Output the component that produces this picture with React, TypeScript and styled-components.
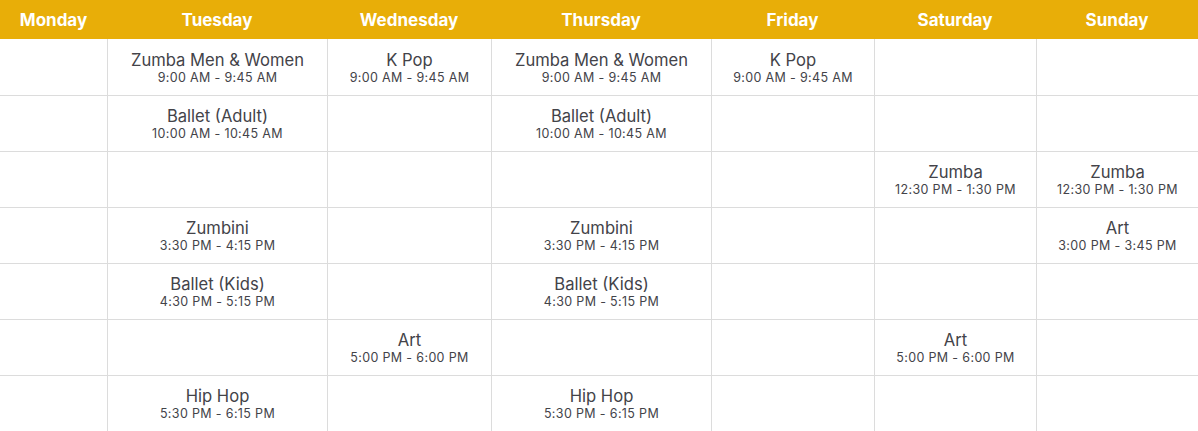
import React from "react";
import styled, { createGlobalStyle } from "styled-components";

const Global = createGlobalStyle`
  html, body { margin: 0; padding: 0; background: #fff; }
  body { font-family: "Inter", "Noto Sans", sans-serif; }
`;

const Table = styled.div`
  display: grid;
  grid-template-columns: 107px 220px 164px 220px 163px 162px 162px;
  grid-template-rows: 39px;
  grid-auto-rows: 56px;
  width: 1198px;
`;

const HeadCell = styled.div`
  background: #e8ae08;
  color: #fff;
  font-weight: 700;
  font-size: 17px;
  display: flex;
  align-items: center;
  justify-content: center;
`;

const Cell = styled.div<{ $first: boolean; $topLine: boolean }>`
  border-left: ${(p) => (p.$first ? "none" : "1px solid #dcdcdc")};
  border-top: ${(p) => (p.$topLine ? "1px solid #dcdcdc" : "none")};
  display: flex;
  flex-direction: column;
  align-items: center;
  justify-content: center;
  padding-top: 2px;
  color: #434349;
  text-align: center;
`;

const Title = styled.div`
  font-size: 16.6px;
  line-height: 19px;
`;

const Time = styled.div`
  font-size: 12.5px;
  line-height: 16px;
  letter-spacing: 0.35px;
`;

const days = ["Monday", "Tuesday", "Wednesday", "Thursday", "Friday", "Saturday", "Sunday"];

type Ev = [string, string] | null;
const Z = (t: string, s: string): Ev => [t, s];

const rows: Ev[][] = [
  [null, Z("Zumba Men & Women", "9:00 AM - 9:45 AM"), Z("K Pop", "9:00 AM - 9:45 AM"), Z("Zumba Men & Women", "9:00 AM - 9:45 AM"), Z("K Pop", "9:00 AM - 9:45 AM"), null, null],
  [null, Z("Ballet (Adult)", "10:00 AM - 10:45 AM"), null, Z("Ballet (Adult)", "10:00 AM - 10:45 AM"), null, null, null],
  [null, null, null, null, null, Z("Zumba", "12:30 PM - 1:30 PM"), Z("Zumba", "12:30 PM - 1:30 PM")],
  [null, Z("Zumbini", "3:30 PM - 4:15 PM"), null, Z("Zumbini", "3:30 PM - 4:15 PM"), null, null, Z("Art", "3:00 PM - 3:45 PM")],
  [null, Z("Ballet (Kids)", "4:30 PM - 5:15 PM"), null, Z("Ballet (Kids)", "4:30 PM - 5:15 PM"), null, null, null],
  [null, null, Z("Art", "5:00 PM - 6:00 PM"), null, null, Z("Art", "5:00 PM - 6:00 PM"), null],
  [null, Z("Hip Hop", "5:30 PM - 6:15 PM"), null, Z("Hip Hop", "5:30 PM - 6:15 PM"), null, null, null],
];

export default function App() {
  return (
    <>
      <Global />
      <Table>
        {days.map((d) => (
          <HeadCell key={d}>{d}</HeadCell>
        ))}
        {rows.map((r, ri) =>
          r.map((ev, ci) => (
            <Cell key={`${ri}-${ci}`} $first={ci === 0} $topLine={ri > 0}>
              {ev && (
                <>
                  <Title>{ev[0]}</Title>
                  <Time>{ev[1]}</Time>
                </>
              )}
            </Cell>
          ))
        )}
      </Table>
    </>
  );
}
